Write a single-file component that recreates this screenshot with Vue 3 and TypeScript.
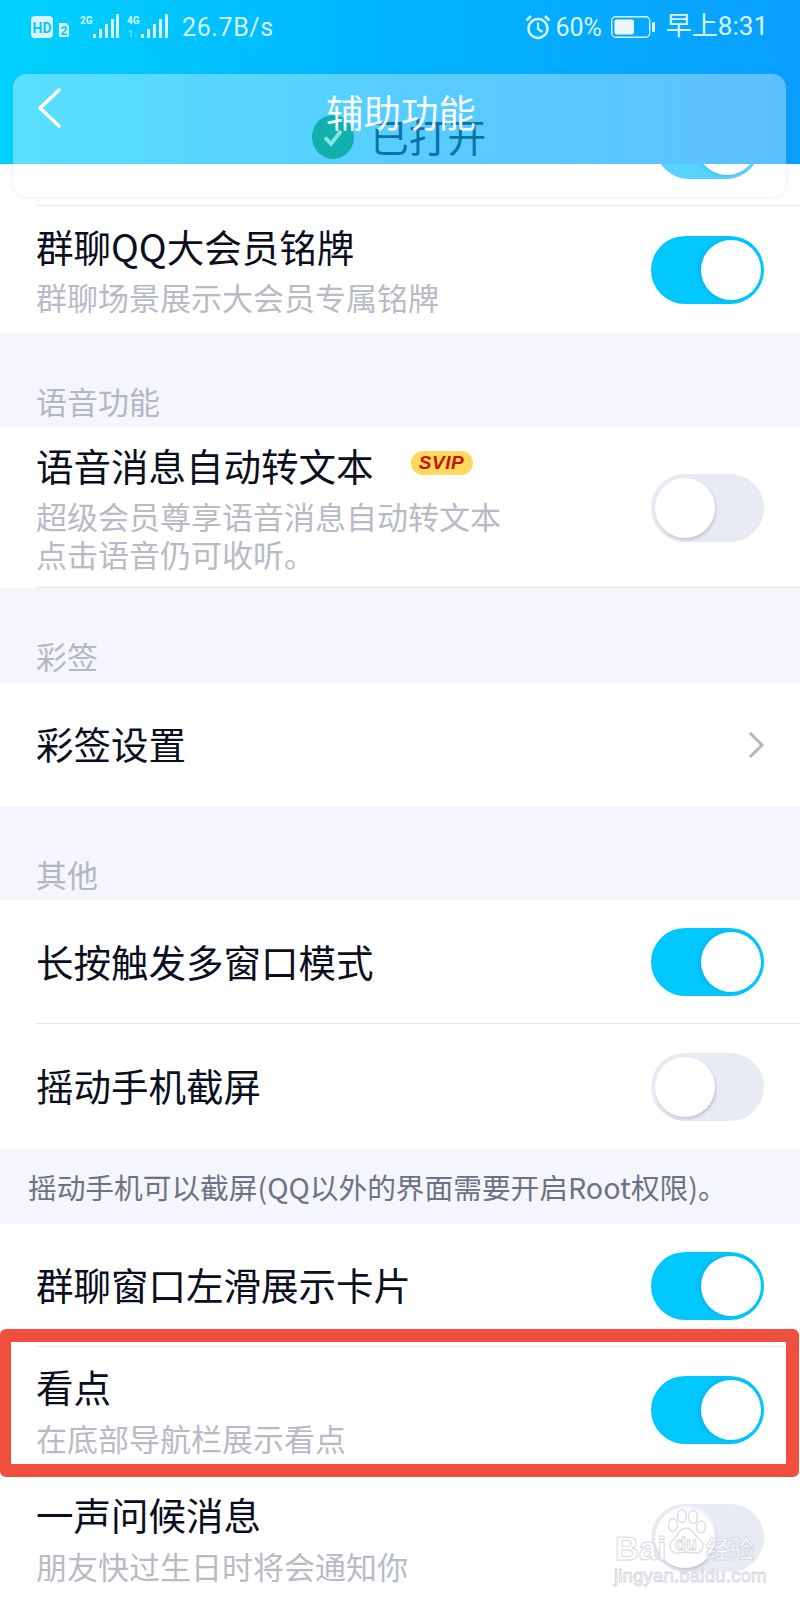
<template>
  <div class="page">
    <div class="top-bg">
      <div class="status-bar">
        <div class="status-left">
          <svg class="net-icons" width="142" height="30" viewBox="0 0 142 30">
            <rect x="0" y="2" width="22" height="22" rx="4" fill="#d9f6ff" />
            <text x="11" y="19" class="hd-text" text-anchor="middle">HD</text>
            <path d="M28 9h7l3 3v11h-10z" fill="#d9f6ff" />
            <text x="33" y="21" class="hd-two" text-anchor="middle">2</text>
            <text x="49" y="9.500" class="net-text">2G</text>
            <text x="96" y="9.500" class="net-text">4G</text>
            <text x="97" y="23" class="net-faint">1↓</text>
            <g fill="#d9f6ff">
              <rect x="62" y="20" width="3" height="4" />
              <rect x="68" y="15" width="3" height="9" />
              <rect x="74" y="10" width="3" height="14" />
              <rect x="80" y="5" width="3" height="19" />
              <rect x="85" y="0" width="3" height="24" />
              <rect x="110" y="20" width="3" height="4" />
              <rect x="116" y="15" width="3" height="9" />
              <rect x="122" y="10" width="3" height="14" />
              <rect x="128" y="5" width="3" height="19" />
              <rect x="134" y="0" width="3" height="24" />
            </g>
          </svg>
          <span class="speed">26.7B/s</span>
        </div>
        <div class="status-right">
          <svg class="alarm" width="26" height="26" viewBox="0 0 26 26" fill="none" stroke="#d9f6ff">
            <circle cx="13" cy="14.500" r="9.500" stroke-width="2.400" />
            <path d="M13 8.500v6.500l4.500 3" stroke-width="2.200" />
            <path d="M1.500 6.500 6 2M24.500 6.500 20 2" stroke-width="2.600" />
          </svg>
          <span class="battery-pct">60%</span>
          <svg class="battery" width="44" height="22" viewBox="0 0 44 22">
            <rect x="0.700" y="0.700" width="38" height="20.600" rx="4" fill="none" stroke="#d9f6ff" stroke-width="1.400" />
            <rect x="3.500" y="3.500" width="19.500" height="15" rx="2" fill="#e9faff" />
            <rect x="41" y="6" width="3" height="10" rx="1" fill="#d9f6ff" />
          </svg>
          <span class="clock">早上8:31</span>
        </div>
      </div>
    </div>

    <div class="row row-line top-gap"></div>

    <template v-for="block in blocks" :key="block.id">
      <div v-if="block.label" class="section-label" :style="{ height: block.labelHeight + 'px' }">
        <span>{{ block.label }}</span>
      </div>
      <div v-if="block.note" class="section-note">{{ block.note }}</div>
      <div
        v-for="row in block.rows"
        :key="row.title"
        class="row"
        :class="{ 'row-line': row.line }"
        :style="{ height: row.height + 'px' }"
      >
        <div class="row-text">
          <div class="row-title">
            {{ row.title }}
            <span v-if="row.badge" class="svip">SVIP</span>
          </div>
          <div v-for="line in row.sub" :key="line" class="row-sub">{{ line }}</div>
        </div>
        <div v-if="row.toggle !== undefined" class="toggle" :class="{ on: row.toggle }">
          <span class="knob"></span>
        </div>
        <svg v-else class="chevron" width="18" height="28" viewBox="0 0 18 28" fill="none">
          <path d="M3 2 15 14 3 26" stroke="#b3b6c2" stroke-width="3" />
        </svg>
      </div>
    </template>

    <!-- translucent navigation card lying over the page -->
    <div class="nav-card">
      <div class="nav-glass"></div>
      <div class="peek">
        <div class="toggle on peek-toggle"><span class="knob"></span></div>
      </div>
    </div>
    <div class="toast">
      <span class="toast-check">
        <svg width="24" height="24" viewBox="0 0 24 24" fill="none">
          <path d="M4 12.500 10 19 20 6" stroke="#7fe3e8" stroke-width="4" />
        </svg>
      </span>
      <span class="toast-text">已打开</span>
    </div>
    <svg class="back" width="26" height="42" viewBox="0 0 26 42" fill="none">
      <path d="M23 3 4 21 23 39" stroke="#ffffff" stroke-width="3.600" stroke-linecap="round" stroke-linejoin="round" />
    </svg>
    <div class="nav-title">辅助功能</div>

    <div class="highlight"></div>

    <div class="watermark">
      <svg class="wm-paw" width="62" height="62" viewBox="0 0 62 62">
        <circle cx="31" cy="31" r="30" fill="#ffffff" fill-opacity="0.5" />
        <g fill="none" stroke="#dcdee5" stroke-width="1.400">
          <ellipse cx="18" cy="20" rx="4.500" ry="6.500" />
          <ellipse cx="27" cy="11" rx="4.500" ry="6.500" />
          <ellipse cx="38" cy="12" rx="4.500" ry="6.500" />
          <ellipse cx="46" cy="22" rx="4.500" ry="6" />
          <path d="M31 23c-7 0-8 8-13 12-6 5-2 14 6 13 5-1 10-1 15 0 8 1 12-7 6-13-5-4-7-12-14-12z" />
        </g>
        <text x="31" y="45" class="wm-du" text-anchor="middle">du</text>
      </svg>
      <span class="wm-bai">Bai</span>
      <span class="wm-jing">经验</span>
      <span class="wm-url">jingyan.baidu.com</span>
    </div>
  </div>
</template>

<script setup lang="ts">
interface Row {
  title: string
  sub?: string[]
  height: number
  toggle?: boolean
  badge?: boolean
  line?: boolean
}

interface Block {
  id: string
  label?: string
  labelHeight?: number
  note?: string
  rows: Row[]
}

const blocks: Block[] = [
  {
    id: 'vip',
    rows: [
      { title: '群聊QQ大会员铭牌', sub: ['群聊场景展示大会员专属铭牌'], height: 127, toggle: true }
    ]
  },
  {
    id: 'voice',
    label: '语音功能',
    labelHeight: 94,
    rows: [
      {
        title: '语音消息自动转文本',
        sub: ['超级会员尊享语音消息自动转文本', '点击语音仍可收听。'],
        height: 161,
        toggle: false,
        badge: true,
        line: true
      }
    ]
  },
  {
    id: 'tag',
    label: '彩签',
    labelHeight: 94,
    rows: [{ title: '彩签设置', height: 125 }]
  },
  {
    id: 'other',
    label: '其他',
    labelHeight: 93,
    rows: [
      { title: '长按触发多窗口模式', height: 124, toggle: true, line: true },
      { title: '摇动手机截屏', height: 125, toggle: false }
    ]
  },
  {
    id: 'card',
    note: '摇动手机可以截屏(QQ以外的界面需要开启Root权限)。',
    rows: [
      { title: '群聊窗口左滑展示卡片', height: 123, toggle: true, line: true },
      { title: '看点', sub: ['在底部导航栏展示看点'], height: 126, toggle: true, line: true },
      { title: '一声问候消息', sub: ['朋友快过生日时将会通知你'], height: 130, toggle: false }
    ]
  }
]
</script>

<style>
body {
  margin: 0;
  background: #ffffff;
}
</style>

<style scoped>
.page {
  position: relative;
  width: 800px;
  height: 1600px;
  overflow: hidden;
  background: #f4f6fb;
  font-family: "Noto Sans CJK SC", "Noto Sans", sans-serif;
  color: #0a0e1e;
}

.top-bg {
  height: 164px;
  background: linear-gradient(90deg, #00d2ff 0%, #00b6ff 45%, #0a9fff 100%);
}

.status-bar {
  display: flex;
  justify-content: space-between;
  align-items: center;
  height: 54px;
  padding: 0 32px 0 31px;
}

.status-left,
.status-right {
  display: flex;
  align-items: center;
  color: #d9f6ff;
}

.net-icons {
  margin-top: 4px;
}

.hd-text {
  font: 700 14px "Roboto", sans-serif;
  fill: #0fc0ff;
}

.hd-two {
  font: 700 12px "Roboto", sans-serif;
  fill: #0fc0ff;
}

.net-text {
  font: 700 10px "Roboto", sans-serif;
  fill: #d9f6ff;
}

.net-faint {
  font: 700 9px "Roboto", sans-serif;
  fill: #7fdcff;
}

.speed {
  margin-left: 9px;
  font: 400 25px "Roboto", sans-serif;
  letter-spacing: 0.6px;
}

.alarm {
  margin-right: 4px;
}

.battery-pct {
  font: 400 25px "Roboto", sans-serif;
  margin-right: 9px;
}

.battery {
  margin-right: 11px;
}

.clock {
  margin-top: -3px;
  font: 400 26px/30px "Roboto", "Noto Sans CJK SC", sans-serif;
}

.top-gap {
  height: 42px;
}

.section-label {
  display: flex;
  align-items: flex-end;
  padding: 0 0 4px 36px;
  box-sizing: border-box;
  font-size: 31px;
  line-height: 44px;
  color: #b4b7c2;
}

.section-note {
  display: flex;
  align-items: center;
  height: 75px;
  padding: 0 0 1px 28px;
  box-sizing: border-box;
  font-size: 28.700px;
  color: #6e7280;
  white-space: nowrap;
}

.row {
  position: relative;
  display: flex;
  align-items: center;
  justify-content: space-between;
  padding: 0 36px;
  box-sizing: border-box;
  background: #ffffff;
}

.row-line::after {
  content: "";
  position: absolute;
  left: 36px;
  right: 0;
  bottom: 0;
  height: 1px;
  background: #e8e9ef;
}

.row-text {
  padding-bottom: 3px;
}

.row-title {
  display: flex;
  align-items: center;
  font-size: 37.500px;
  line-height: 52px;
  white-space: nowrap;
}

.row-sub {
  font-size: 31px;
  line-height: 38px;
  color: #b8bbc6;
  white-space: nowrap;
}

.row-title + .row-sub {
  margin-top: 6.500px;
}

.svip {
  width: 62px;
  height: 24px;
  margin-left: 37px;
  margin-top: -4px;
  border-radius: 12px;
  background: #ffd95f;
  color: #c4140e;
  font: italic 700 19px/24px "Liberation Sans", sans-serif;
  letter-spacing: 0.5px;
  text-align: center;
}

.toggle {
  position: relative;
  flex: none;
  width: 113px;
  height: 68px;
  border-radius: 34px;
  background: #e8eaf4;
}

.toggle.on {
  background: #00c8ff;
}

.knob {
  position: absolute;
  top: 4px;
  left: 4px;
  width: 60px;
  height: 60px;
  border-radius: 50%;
  background: #ffffff;
  box-shadow: 1px 2px 3px rgba(120, 125, 150, 0.35);
}

.toggle.on .knob {
  left: auto;
  right: 3px;
  box-shadow: -2px 0 4px rgba(0, 120, 170, 0.25);
}

.chevron {
  margin-right: -1px;
}

.nav-card {
  position: absolute;
  top: 74px;
  left: 13px;
  width: 773px;
  height: 123px;
  border-radius: 14px;
  overflow: hidden;
  box-shadow: 0 0 4px rgba(120, 130, 160, 0.18);
}

.nav-glass {
  height: 90px;
  background: rgba(255, 255, 255, 0.34);
}

.peek {
  position: relative;
  height: 15px;
  overflow: hidden;
  background: #ffffff;
}

.toggle.peek-toggle {
  position: absolute;
  top: -53px;
  left: 642px;
  width: 105px;
  background: #58d2ff;
}

.nav-title {
  position: absolute;
  top: 85px;
  left: 326px;
  font-size: 37.500px;
  line-height: 52px;
  color: #ffffff;
  opacity: 0.94;
}

.toast {
  position: absolute;
  top: 113px;
  left: 312px;
  display: flex;
  align-items: center;
}

.toast-check {
  display: flex;
  align-items: center;
  justify-content: center;
  width: 42px;
  height: 44px;
  border-radius: 50%;
  background: #12b0ac;
}

.toast-text {
  margin: -3px 0 0 16px;
  font-size: 38.800px;
  line-height: 50px;
  color: #0b73a4;
}

.back {
  position: absolute;
  top: 87px;
  left: 36px;
}

.highlight {
  position: absolute;
  top: 1329px;
  left: 0;
  width: 799px;
  height: 148px;
  box-sizing: border-box;
  border: solid #ef4f3c;
  border-width: 13px 13px 13px 11px;
  border-radius: 6px;
}

.watermark {
  position: absolute;
  top: 1500px;
  left: 610px;
  width: 150px;
  height: 90px;
}

.wm-bai,
.wm-jing,
.wm-url {
  position: absolute;
  color: rgba(255, 255, 255, 0.7);
  -webkit-text-stroke: 1px #d8dae1;
  white-space: nowrap;
}

.wm-bai {
  top: 31px;
  left: 5px;
  font: 700 33px/36px "Liberation Sans", sans-serif;
}

.wm-jing {
  top: 33px;
  left: 96px;
  font-size: 24px;
  line-height: 30px;
  font-weight: 700;
}

.wm-url {
  top: 65px;
  left: 4px;
  font: 400 18.500px/22px "Liberation Sans", sans-serif;
  letter-spacing: 0.2px;
}

.wm-paw {
  position: absolute;
  top: 5px;
  left: 45px;
}

.wm-du {
  font: 700 18px "Liberation Sans", sans-serif;
  fill: #ffffff;
  stroke: #d0d2da;
  stroke-width: 0.8px;
}
</style>
